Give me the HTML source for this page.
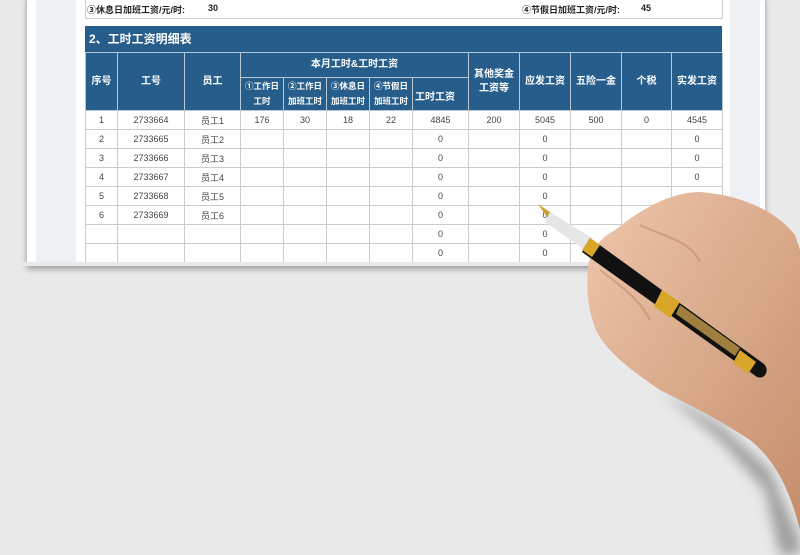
<!DOCTYPE html>
<html><head><meta charset="utf-8"><style>
body{margin:0;width:800px;height:555px;background:#e9e9e9;position:relative;overflow:hidden;font-family:"Liberation Sans","Noto Sans CJK SC",sans-serif}
.card{position:absolute;left:27px;top:-5px;width:738px;height:271px;background:#fff;box-shadow:0 3px 6px rgba(0,0,0,.35)}
.pale{position:absolute;left:36px;top:0;width:40px;height:262px;background:#eef1f4}
.paleR{position:absolute;left:730px;top:0;width:30px;height:262px;background:#eef1f4}
.top{position:absolute;left:85px;top:-1px;width:636px;height:18px;border:1px solid #ccc;background:#fff;font-size:9px;font-weight:bold;color:#222}
.title{position:absolute;left:85px;top:26px;width:637px;height:26px;background:#265d8a;color:#fff;font-weight:bold;font-size:12px;line-height:26px;padding-left:4px;box-sizing:border-box}
table{position:absolute;left:85px;top:52px;border-collapse:collapse;table-layout:fixed;width:637px}
td{border:1px solid #ccc;text-align:center;font-size:9px;color:#444;height:18px;padding:0}
th{background:#265d8a;color:#fff;border:1px solid #b9c7d4;font-size:10px;padding:0;line-height:14px}
th.s{font-size:8.5px;line-height:15px}
</style></head><body>
<div class="card"></div>
<div class="pale"></div><div class="paleR"></div>
<div class="top"><span style="position:absolute;left:1px;top:3px">③休息日加班工资/元/时:</span><span style="position:absolute;left:122px;top:3px">30</span><span style="position:absolute;left:436px;top:3px">④节假日加班工资/元/时:</span><span style="position:absolute;left:555px;top:3px">45</span></div>
<div class="title">2、工时工资明细表</div>
<table>
<colgroup><col style="width:32px"><col style="width:67px"><col style="width:56px"><col style="width:43px"><col style="width:43px"><col style="width:43px"><col style="width:43px"><col style="width:56px"><col style="width:51px"><col style="width:51px"><col style="width:51px"><col style="width:50px"><col style="width:51px"></colgroup>
<tr style="height:25px"><th rowspan="2">序号</th><th rowspan="2">工号</th><th rowspan="2">员工</th><th colspan="5">本月工时&amp;工时工资</th><th rowspan="2">其他奖金<br>工资等</th><th rowspan="2">应发工资</th><th rowspan="2">五险一金</th><th rowspan="2">个税</th><th rowspan="2">实发工资</th></tr>
<tr style="height:33px"><th class="s">①工作日<br>工时</th><th class="s">②工作日<br>加班工时</th><th class="s">③休息日<br>加班工时</th><th class="s">④节假日<br>加班工时</th><th style="text-align:left;padding-left:2px;padding-top:8px">工时工资</th></tr>
<tr><td>1</td><td>2733664</td><td>员工1</td><td>176</td><td>30</td><td>18</td><td>22</td><td>4845</td><td>200</td><td>5045</td><td>500</td><td>0</td><td>4545</td></tr>
<tr><td>2</td><td>2733665</td><td>员工2</td><td></td><td></td><td></td><td></td><td>0</td><td></td><td>0</td><td></td><td></td><td>0</td></tr>
<tr><td>3</td><td>2733666</td><td>员工3</td><td></td><td></td><td></td><td></td><td>0</td><td></td><td>0</td><td></td><td></td><td>0</td></tr>
<tr><td>4</td><td>2733667</td><td>员工4</td><td></td><td></td><td></td><td></td><td>0</td><td></td><td>0</td><td></td><td></td><td>0</td></tr>
<tr><td>5</td><td>2733668</td><td>员工5</td><td></td><td></td><td></td><td></td><td>0</td><td></td><td>0</td><td></td><td></td><td>0</td></tr>
<tr><td>6</td><td>2733669</td><td>员工6</td><td></td><td></td><td></td><td></td><td>0</td><td></td><td>0</td><td></td><td></td><td>0</td></tr>
<tr><td></td><td></td><td></td><td></td><td></td><td></td><td></td><td>0</td><td></td><td>0</td><td></td><td></td><td>0</td></tr>
<tr><td></td><td></td><td></td><td></td><td></td><td></td><td></td><td>0</td><td></td><td>0</td><td></td><td></td><td>0</td></tr>
</table>
<div style="position:absolute;left:0;top:262px;width:800px;height:4px;background:#e9e9e9"></div>
<svg style="position:absolute;left:0;top:0" width="800" height="555">
<defs><filter id="b"><feGaussianBlur stdDeviation="6"/></filter>
<linearGradient id="sk" x1="0" y1="0" x2="1" y2="1"><stop offset="0" stop-color="#efc6ab"/><stop offset="1" stop-color="#c48e6c"/></linearGradient></defs>
<path d="M600,340 L660,390 L720,425 L770,470 L800,540 L800,555 L780,555 L765,490 L720,440 Z" fill="#555" opacity=".5" filter="url(#b)"/>
<path d="M588,268 C590,250 600,238 615,230 C640,210 670,192 700,192 C740,195 775,210 795,235 L800,250 L800,530 C790,490 775,460 750,440 C720,420 690,405 660,390 C630,370 605,350 596,330 C588,310 586,290 588,268 Z" fill="url(#sk)"/>
<path d="M600,270 C620,285 640,300 650,320" stroke="#b78466" stroke-width="2" fill="none" opacity=".5"/>
<path d="M640,225 C660,235 690,240 700,262" stroke="#b78466" stroke-width="2" fill="none" opacity=".5"/>
<path d="M538,204 L553,214 L549,220 Z" fill="#c9a23a"/>
<path d="M550,212 L592,238 L585,250 L545,222 Z" fill="#e6e6e6"/>
<path d="M590,238 L764,364 C770,370 765,380 757,377 L582,252 Z" fill="#111"/>
<path d="M590,238 L600,245 L592,257 L582,250 Z" fill="#d8a72a"/>
<path d="M662,290 L680,302 L670,318 L654,306 Z" fill="#d8a72a"/>
<path d="M680,305 L740,348 L735,356 L676,314 Z" fill="#c49a4a" opacity=".8"/>
<path d="M740,350 L756,362 L748,374 L733,363 Z" fill="#d8a72a"/>
</svg>
</body></html>
